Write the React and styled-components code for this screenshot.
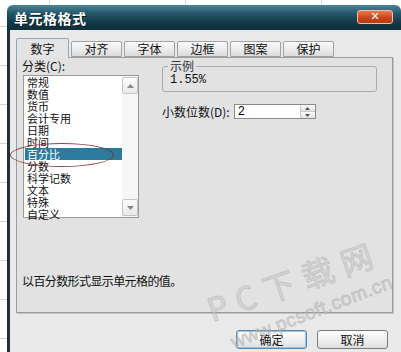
import React from "react";
import styled, { createGlobalStyle } from "styled-components";

const cjk = `"Noto Sans CJK SC", "Noto Sans", sans-serif`;

const GlobalStyle = createGlobalStyle`
  body {
    margin: 0;
    background: #fff;
    font-family: ${cjk};
  }
`;

// spreadsheet behind the dialog
const Page = styled.div`
  position: relative;
  width: 401px;
  height: 352px;
  overflow: hidden;
  box-sizing: border-box;
  padding: 5px 0 0 7px;
  background-color: #fff;
  background-image: linear-gradient(#d4d4d4 1px, transparent 1px),
    linear-gradient(90deg, #d4d4d4 1px, transparent 1px);
  background-size: 100% 39px, 136px 100%;
  background-position: 0 26px, 49px 0;
`;

const Window = styled.div`
  width: 394px;
  height: 347px;
  display: flex;
  flex-direction: column;
  border-radius: 6px 6px 0 0;
  overflow: hidden;
  background: #e9e9e9;
`;

const TitleBar = styled.div`
  height: 25px;
  flex-shrink: 0;
  display: flex;
  align-items: center;
  justify-content: space-between;
  padding: 0 8px 0 7px;
  background: linear-gradient(#4a8598 0%, #245566 35%, #133a48 70%, #0e2e3a 100%);
`;

const Title = styled.span`
  color: #fff;
  font-size: 14px;
  font-weight: 700;
  letter-spacing: 0.5px;
  text-shadow: 1px 1px 0 #0a2028;
`;

const CloseButton = styled.div`
  width: 34px;
  height: 12px;
  margin-top: -2px;
  border: 1px solid #f0c0a8;
  border-radius: 3px;
  background: linear-gradient(#e8794a, #c9441c 60%, #b93a14);
  display: flex;
  align-items: center;
  justify-content: center;
  color: #fff;
  font-family: "DejaVu Sans", sans-serif;
  font-size: 11px;
  font-weight: 700;
  line-height: 1;
`;

const Body = styled.div`
  flex: 1;
  display: flex;
  flex-direction: column;
  border-left: 3px solid #1d323c;
  padding: 8px 8px 0 6px;
`;

//  ** tabs **
const TabRow = styled.div`
  display: flex;
  align-items: flex-end;
  height: 19px;
  position: relative;
  z-index: 1;
`;

const Tab = styled.div`
  box-sizing: border-box;
  width: ${(p) => (p.$active ? "53px" : "51px")};
  height: ${(p) => (p.$active ? "20px" : "16px")};
  margin-left: ${(p) => (p.$first ? "0" : "2px")};
  margin-bottom: ${(p) => (p.$active ? "-1px" : "0")};
  border: 1px solid ${(p) => (p.$active ? "#8aa9bf" : "#a3a3a3")};
  border-bottom: ${(p) => (p.$active ? "none" : "1px solid #a3a3a3")};
  border-radius: 2px 2px 0 0;
  background: ${(p) =>
    p.$active ? "#e4e4e4" : "linear-gradient(#fbfbfb, #e6e6e6 70%, #dadada)"};
  display: flex;
  align-items: center;
  justify-content: center;
  font-size: 12px;
  line-height: 12px;
  color: #111;
`;

const Panel = styled.div`
  box-sizing: border-box;
  width: 377px;
  height: 256px;
  border: 1px solid #9c9c9c;
  box-shadow: 1px 1px 0 #c4c4c4;
  background: #e2e2e2;
  display: flex;
  flex-direction: column;
  padding: 1px 0 24px 5px;
`;

const Columns = styled.div`
  display: grid;
  grid-template-columns: 118px 215px;
  column-gap: 22px;
`;

const Label = styled.div`
  font-size: 12px;
  line-height: 14px;
  color: #111;
  white-space: nowrap;
`;

//  ** category list **
const ListBox = styled.div`
  box-sizing: border-box;
  width: 116px;
  height: 143px;
  margin: 2px 0 0 1px;
  border: 1px solid #9a9a9a;
  background: #fff;
  display: flex;
`;

const Items = styled.div`
  flex: 1;
  padding-left: 1px;
`;

const Item = styled.div`
  height: 12px;
  font-size: 11px;
  line-height: 12px;
  padding-left: 2px;
  color: ${(p) => (p.$selected ? "#fff" : "#111")};
  background: ${(p) => (p.$selected ? "#2c7b9b" : "transparent")};
  white-space: nowrap;
`;

const ScrollBar = styled.div`
  width: 16px;
  padding: 1px 0;
  display: flex;
  flex-direction: column;
  justify-content: space-between;
  background: #f6f6f6;
`;

const ScrollButton = styled.div`
  box-sizing: border-box;
  height: 17px;
  border: 1px solid #c4c4c4;
  border-radius: 2px;
  background: linear-gradient(#fdfdfd, #e8e8e8);
  display: flex;
  align-items: center;
  justify-content: center;
`;

//  ** right side **
const Sample = styled.fieldset`
  margin: 0;
  padding: 0 0 3px 7px;
  border: 1px solid #aaaaaa;
  border-radius: 3px;
  height: 33px;
  box-sizing: border-box;
`;

const Legend = styled.legend`
  padding: 0 2px;
  margin-left: -2px;
  font-size: 12px;
  line-height: 14px;
  color: #333;
`;

const SampleValue = styled.div`
  font-family: "Liberation Mono", monospace;
  font-size: 12px;
  line-height: 14px;
  color: #111;
`;

const DecimalRow = styled.div`
  display: flex;
  align-items: center;
  margin-top: 12px;
`;

const SpinInput = styled.div`
  box-sizing: border-box;
  width: 82px;
  height: 15px;
  margin-left: 4px;
  border: 1px solid #8a8a8a;
  background: #fff;
  display: flex;
  align-items: center;
  justify-content: space-between;
  padding-left: 3px;
  font-family: "Liberation Mono", monospace;
  font-size: 12px;
`;

const Spinner = styled.div`
  width: 14px;
  height: 13px;
  display: flex;
  flex-direction: column;
  border-left: 1px solid #c8c8c8;
`;

const SpinHalf = styled.div`
  flex: 1;
  display: flex;
  align-items: center;
  justify-content: center;
  background: linear-gradient(#fafafa, #e4e4e4);
  border-bottom: ${(p) => (p.$top ? "1px solid #c8c8c8" : "none")};
`;

const Description = styled.div`
  margin-top: auto;
  font-size: 12px;
  line-height: 14px;
  letter-spacing: -0.6px;
  color: #111;
`;

//  ** buttons **
const ButtonRow = styled.div`
  display: flex;
  justify-content: flex-end;
  gap: 10px;
  padding: 17px 5px 0 0;
`;

const Button = styled.div`
  box-sizing: border-box;
  width: 71px;
  height: 19px;
  border: 1px solid ${(p) => (p.$default ? "#5f86a6" : "#7a7a7a")};
  box-shadow: ${(p) => (p.$default ? "inset 0 0 0 1px #9cc3e2" : "none")};
  border-radius: 3px;
  background: linear-gradient(#fefefe, #ececec 60%, #dedede);
  display: flex;
  align-items: center;
  justify-content: center;
  font-size: 12px;
  color: #111;
`;

//  ** overlays **
const Ellipse = styled.div`
  position: absolute;
  left: 10px;
  top: 143px;
  width: 102px;
  height: 22px;
  border: 1px solid rgba(130, 40, 40, 0.85);
  border-radius: 50%;
  pointer-events: none;
`;

const Watermark = styled.span`
  position: absolute;
  left: ${(p) => p.$x}px;
  top: ${(p) => p.$y}px;
  transform: rotate(${(p) => p.$angle}deg);
  transform-origin: left center;
  font-family: ${(p) => (p.$latin ? `"Liberation Sans", sans-serif` : cjk)};
  font-size: ${(p) => p.$size}px;
  letter-spacing: ${(p) => p.$spacing}px;
  line-height: 1.1;
  white-space: nowrap;
  color: rgba(205, 205, 205, 0.55);
  -webkit-text-stroke: 1px rgba(150, 150, 150, 0.35);
  pointer-events: none;
`;

const Arrow = ({ up }) => (
  <svg width="7" height="4" viewBox="0 0 7 4">
    <path d={up ? "M0 4 L3.5 0 L7 4 Z" : "M0 0 L3.5 4 L7 0 Z"} fill="#8a8a8a" />
  </svg>
);

const SmallArrow = ({ up }) => (
  <svg width="5" height="3" viewBox="0 0 5 3">
    <path d={up ? "M0 3 L2.5 0 L5 3 Z" : "M0 0 L2.5 3 L5 0 Z"} fill="#555" />
  </svg>
);

const tabs = ["数字", "对齐", "字体", "边框", "图案", "保护"];
const categories = [
  "常规",
  "数值",
  "货币",
  "会计专用",
  "日期",
  "时间",
  "百分比",
  "分数",
  "科学记数",
  "文本",
  "特殊",
  "自定义",
];

const App = () => {
  return (
    <Page>
      <GlobalStyle />
      <Window>
        <TitleBar>
          <Title>单元格格式</Title>
          <CloseButton>✕</CloseButton>
        </TitleBar>
        <Body>
          <TabRow>
            {tabs.map((t, i) => (
              <Tab key={t} $active={i === 0} $first={i === 0}>
                {t}
              </Tab>
            ))}
          </TabRow>
          <Panel>
            <Columns>
              <div>
                <Label>分类(C):</Label>
                <ListBox>
                  <Items>
                    {categories.map((c) => (
                      <Item key={c} $selected={c === "百分比"}>
                        {c}
                      </Item>
                    ))}
                  </Items>
                  <ScrollBar>
                    <ScrollButton>
                      <Arrow up />
                    </ScrollButton>
                    <ScrollButton>
                      <Arrow />
                    </ScrollButton>
                  </ScrollBar>
                </ListBox>
              </div>
              <div>
                <Sample>
                  <Legend>示例</Legend>
                  <SampleValue>1.55%</SampleValue>
                </Sample>
                <DecimalRow>
                  <Label>小数位数(D):</Label>
                  <SpinInput>
                    2
                    <Spinner>
                      <SpinHalf $top>
                        <SmallArrow up />
                      </SpinHalf>
                      <SpinHalf>
                        <SmallArrow />
                      </SpinHalf>
                    </Spinner>
                  </SpinInput>
                </DecimalRow>
              </div>
            </Columns>
            <Description>以百分数形式显示单元格的值。</Description>
          </Panel>
          <ButtonRow>
            <Button $default>确定</Button>
            <Button>取消</Button>
          </ButtonRow>
        </Body>
      </Window>
      <Ellipse />
      <Watermark $x={208} $y={292} $angle={-19} $size={32} $spacing={9}>
        PC下载网
      </Watermark>
      <Watermark $latin $x={232} $y={333} $angle={-21} $size={19} $spacing={0.5}>
        www.pcsoft.com.cn
      </Watermark>
    </Page>
  );
};

export default App;
